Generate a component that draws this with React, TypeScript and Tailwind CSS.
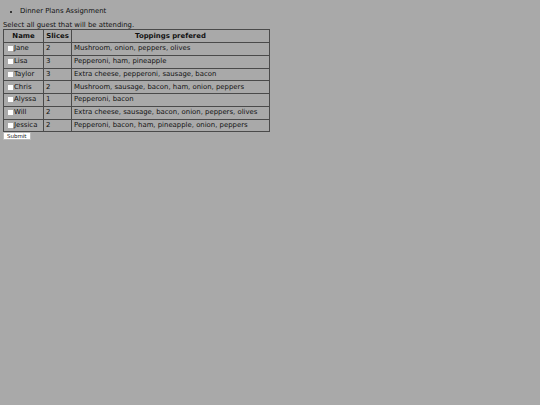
import React from "react";

const rows = [
  ["Jane", "2", "Mushroom, onion, peppers, olives"],
  ["Lisa", "3", "Pepperoni, ham, pineapple"],
  ["Taylor", "3", "Extra cheese, pepperoni, sausage, bacon"],
  ["Chris", "2", "Mushroom, sausage, bacon, ham, onion, peppers"],
  ["Alyssa", "1", "Pepperoni, bacon"],
  ["Will", "2", "Extra cheese, sausage, bacon, onion, peppers, olives"],
  ["Jessica", "2", "Pepperoni, bacon, ham, pineapple, onion, peppers"],
];

export default function App() {
  return (
    <div
      className="w-[540px] h-[405px] bg-[#a9a9a9] text-[#111] text-[6.9px] leading-[9px] overflow-hidden"
      style={{ fontFamily: '"DejaVu Sans", Verdana, sans-serif' }}
    >
      <ul className="pl-[20px] pt-[7px] list-disc marker:text-[5px]">
        <li className="h-[10px]">Dinner Plans Assignment</li>
      </ul>
      <div className="pl-[3px] pt-[5px]">
        <div className="h-[7px] leading-[7px] whitespace-nowrap">Select all guest that will be attending.</div>
        <table className="border-collapse border border-[#4a4a4a] w-[267px] table-fixed whitespace-nowrap">
          <colgroup>
            <col className="w-[40px]" />
            <col className="w-[28px]" />
            <col />
          </colgroup>
          <thead>
            <tr className="h-[13px]">
              <th className="border border-[#4a4a4a] font-bold p-0">Name</th>
              <th className="border border-[#4a4a4a] font-bold p-0">Slices</th>
              <th className="border border-[#4a4a4a] font-bold p-0">Toppings prefered</th>
            </tr>
          </thead>
          <tbody>
            {rows.map((r) => (
              <tr key={r[0]} className="h-[12.75px]">
                <td className="border border-[#4a4a4a] p-0 pl-[4px] text-left">
                  <div className="flex items-center h-[11.75px]">
                    <span className="inline-block w-[5px] h-[5px] bg-white mr-[1px] shrink-0" />
                    <span>{r[0]}</span>
                  </div>
                </td>
                <td className="border border-[#4a4a4a] p-0 pl-[2px]">{r[1]}</td>
                <td className="border border-[#4a4a4a] p-0 pl-[2px]">{r[2]}</td>
              </tr>
            ))}
          </tbody>
        </table>
        <button className="bg-white text-[5.5px] leading-[6px] h-[8px] px-[3px] border border-[#bbb] rounded-[1px]">
          Submit
        </button>
      </div>
    </div>
  );
}
